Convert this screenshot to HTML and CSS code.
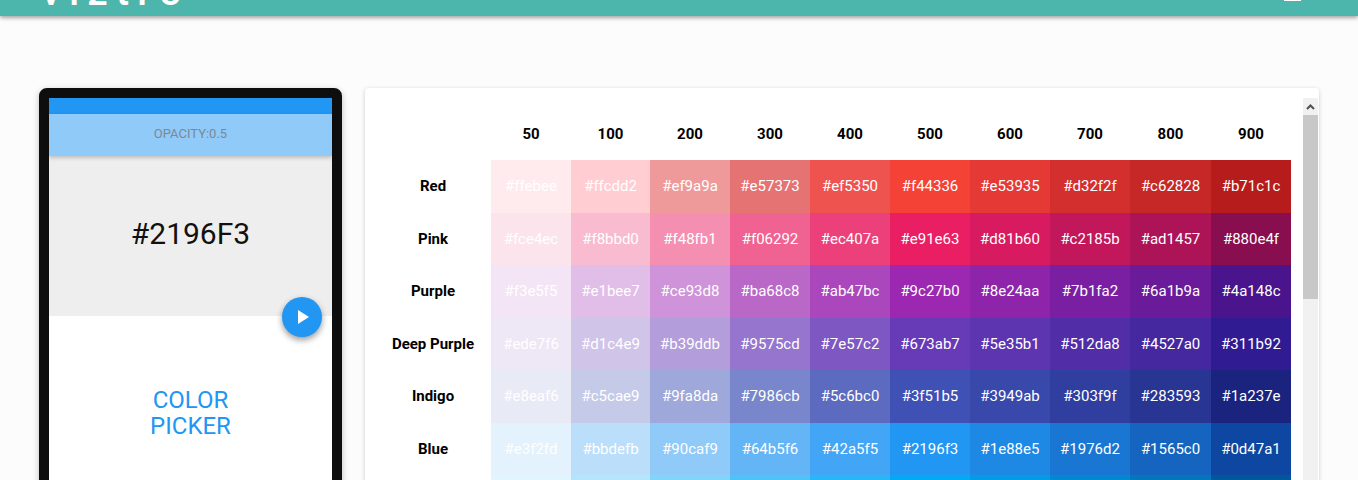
FILE: index.html
```html
<!DOCTYPE html>
<html lang="en">
<head>
    <title>Viztro - Material Colors</title>
    <meta name="viewport" content="width=device-width, initial-scale=1.0">
    <link rel="stylesheet" href="styles.css">
</head>
<body>

    <header class="topbar">
        <span class="logo">viztro</span>
        <span class="menu-line"></span>
    </header>

    <main class="page">
        <!-- phone preview -->
        <section class="phone">
            <div class="phone-status"></div>
            <div class="phone-appbar">OPACITY:0.5</div>
            <div class="phone-hero">#2196F3</div>
            <div class="phone-body">COLOR<br>PICKER</div>
            <button class="fab" type="button">
                <svg width="11" height="14" viewBox="0 0 11 14"><path d="M0 0v14l11-7z" fill="#fff"/></svg>
            </button>
        </section>

        <!-- palette table -->
        <section class="card">
            <div class="table-wrap">
                <table class="palette">
                    <tr>
                        <th class="name-col"></th><th>50</th><th class="col-narrow">100</th><th>200</th><th>300</th><th>400</th><th>500</th><th>600</th><th>700</th><th class="col-wide">800</th><th>900</th>
                    </tr>
                    <tr>
                        <th>Red</th>
                        <td style="background:#ffebee">#ffebee</td>
                        <td style="background:#ffcdd2">#ffcdd2</td>
                        <td style="background:#ef9a9a">#ef9a9a</td>
                        <td style="background:#e57373">#e57373</td>
                        <td style="background:#ef5350">#ef5350</td>
                        <td style="background:#f44336">#f44336</td>
                        <td style="background:#e53935">#e53935</td>
                        <td style="background:#d32f2f">#d32f2f</td>
                        <td style="background:#c62828">#c62828</td>
                        <td style="background:#b71c1c">#b71c1c</td>
                    </tr>
                    <tr>
                        <th>Pink</th>
                        <td style="background:#fce4ec">#fce4ec</td>
                        <td style="background:#f8bbd0">#f8bbd0</td>
                        <td style="background:#f48fb1">#f48fb1</td>
                        <td style="background:#f06292">#f06292</td>
                        <td style="background:#ec407a">#ec407a</td>
                        <td style="background:#e91e63">#e91e63</td>
                        <td style="background:#d81b60">#d81b60</td>
                        <td style="background:#c2185b">#c2185b</td>
                        <td style="background:#ad1457">#ad1457</td>
                        <td style="background:#880e4f">#880e4f</td>
                    </tr>
                    <tr>
                        <th>Purple</th>
                        <td style="background:#f3e5f5">#f3e5f5</td>
                        <td style="background:#e1bee7">#e1bee7</td>
                        <td style="background:#ce93d8">#ce93d8</td>
                        <td style="background:#ba68c8">#ba68c8</td>
                        <td style="background:#ab47bc">#ab47bc</td>
                        <td style="background:#9c27b0">#9c27b0</td>
                        <td style="background:#8e24aa">#8e24aa</td>
                        <td style="background:#7b1fa2">#7b1fa2</td>
                        <td style="background:#6a1b9a">#6a1b9a</td>
                        <td style="background:#4a148c">#4a148c</td>
                    </tr>
                    <tr>
                        <th>Deep Purple</th>
                        <td style="background:#ede7f6">#ede7f6</td>
                        <td style="background:#d1c4e9">#d1c4e9</td>
                        <td style="background:#b39ddb">#b39ddb</td>
                        <td style="background:#9575cd">#9575cd</td>
                        <td style="background:#7e57c2">#7e57c2</td>
                        <td style="background:#673ab7">#673ab7</td>
                        <td style="background:#5e35b1">#5e35b1</td>
                        <td style="background:#512da8">#512da8</td>
                        <td style="background:#4527a0">#4527a0</td>
                        <td style="background:#311b92">#311b92</td>
                    </tr>
                    <tr>
                        <th>Indigo</th>
                        <td style="background:#e8eaf6">#e8eaf6</td>
                        <td style="background:#c5cae9">#c5cae9</td>
                        <td style="background:#9fa8da">#9fa8da</td>
                        <td style="background:#7986cb">#7986cb</td>
                        <td style="background:#5c6bc0">#5c6bc0</td>
                        <td style="background:#3f51b5">#3f51b5</td>
                        <td style="background:#3949ab">#3949ab</td>
                        <td style="background:#303f9f">#303f9f</td>
                        <td style="background:#283593">#283593</td>
                        <td style="background:#1a237e">#1a237e</td>
                    </tr>
                    <tr>
                        <th>Blue</th>
                        <td style="background:#e3f2fd">#e3f2fd</td>
                        <td style="background:#bbdefb">#bbdefb</td>
                        <td style="background:#90caf9">#90caf9</td>
                        <td style="background:#64b5f6">#64b5f6</td>
                        <td style="background:#42a5f5">#42a5f5</td>
                        <td style="background:#2196f3">#2196f3</td>
                        <td style="background:#1e88e5">#1e88e5</td>
                        <td style="background:#1976d2">#1976d2</td>
                        <td style="background:#1565c0">#1565c0</td>
                        <td style="background:#0d47a1">#0d47a1</td>
                    </tr>
                    <tr>
                        <th>Light Blue</th>
                        <td style="background:#e1f5fe">#e1f5fe</td>
                        <td style="background:#b3e5fc">#b3e5fc</td>
                        <td style="background:#81d4fa">#81d4fa</td>
                        <td style="background:#4fc3f7">#4fc3f7</td>
                        <td style="background:#29b6f6">#29b6f6</td>
                        <td style="background:#03a9f4">#03a9f4</td>
                        <td style="background:#039be5">#039be5</td>
                        <td style="background:#0288d1">#0288d1</td>
                        <td style="background:#0277bd">#0277bd</td>
                        <td style="background:#01579b">#01579b</td>
                    </tr>
                </table>
            </div>
            <div class="scrollbar">
                <div class="scroll-up">
                    <svg width="9" height="6" viewBox="0 0 9 6"><path d="M1 5l3.5-3.5L8 5" fill="none" stroke="#505050" stroke-width="2"/></svg>
                </div>
                <div class="scroll-thumb"></div>
            </div>
        </section>
    </main>

</body>
</html>
```

FILE: styles.css
```css
html, body {
    height: 100%;
    overflow: hidden;
}

body {
    margin: 0;
    background-color: #fcfcfc;
    font-family: Roboto, sans-serif;
}

.topbar {
    height: 16px;
    background-color: #4db6ac;
    box-shadow: 0 2px 4px rgba(0, 0, 0, 0.35);
    display: flex;
    justify-content: space-between;
    padding: 0 57px 0 41px;
    overflow: hidden;
    position: relative;
}

.logo {
    color: white;
    font-size: 40px;
    font-weight: 500;
    letter-spacing: 8.2px;
    line-height: 40px;
    margin-top: -28px;
}

.menu-line {
    width: 17px;
    height: 1px;
    background-color: white;
}

.page {
    display: flex;
    gap: 23px;
    padding: 72px 39px 0;
}

/* phone */
.phone {
    width: 283px;
    flex-shrink: 0;
    border: 10px solid #0e0e0e;
    border-radius: 8px;
    background-color: white;
    box-shadow: 0 2px 6px rgba(0, 0, 0, 0.25);
    position: relative;
}

.phone-status {
    height: 16px;
    background-color: #2196f3;
}

.phone-appbar {
    height: 38px;
    padding-bottom: 4px;
    background-color: #90caf9;
    box-shadow: 0 2px 4px rgba(0, 0, 0, 0.2);
    color: #7d8894;
    font-size: 13px;
    display: flex;
    justify-content: center;
    align-items: center;
    position: relative;
}

.phone-hero {
    height: 154px;
    padding-bottom: 6px;
    background-color: #eeeeee;
    color: #111;
    font-size: 30px;
    display: flex;
    justify-content: center;
    align-items: center;
}

.phone-body {
    height: 194px;
    color: #2196f3;
    font-size: 24px;
    line-height: 26px;
    display: flex;
    justify-content: center;
    align-items: center;
    text-align: center;
}

.fab {
    position: absolute;
    top: 199px;
    right: 10px;
    width: 40px;
    height: 40px;
    padding: 0 0 0 2px;
    border: none;
    border-radius: 50%;
    background-color: #2196f3;
    box-shadow: 0 3px 6px rgba(0, 0, 0, 0.4);
    display: flex;
    justify-content: center;
    align-items: center;
}

/* palette card */
.card {
    flex: 1;
    display: flex;
    height: 500px;
    padding: 10px 1px 0 10px;
    background-color: white;
    border-radius: 4px;
    box-shadow: 0 1px 4px rgba(0, 0, 0, 0.2);
}

.table-wrap {
    flex: 1;
    padding-top: 9.5px;
}

.palette {
    width: 916px;
    table-layout: fixed;
    border-collapse: collapse;
    font-size: 15px;
    line-height: 17.5px;
}

.palette th, .palette td {
    padding: 18px 0 17px;
    text-align: center;
}

.palette th {
    width: 80px;
    color: black;
    font-weight: 700;
}

.palette td {
    color: white;
}

.palette .name-col {
    width: 116px;
}

.palette .col-narrow {
    width: 79px;
}

.palette .col-wide {
    width: 81px;
}

.scrollbar {
    width: 15px;
    flex-shrink: 0;
    background-color: #f1f1f1;
}

.scroll-up {
    height: 17px;
    display: flex;
    justify-content: center;
    align-items: center;
}

.scroll-thumb {
    height: 184px;
    background-color: #c8c8c8;
}
```
